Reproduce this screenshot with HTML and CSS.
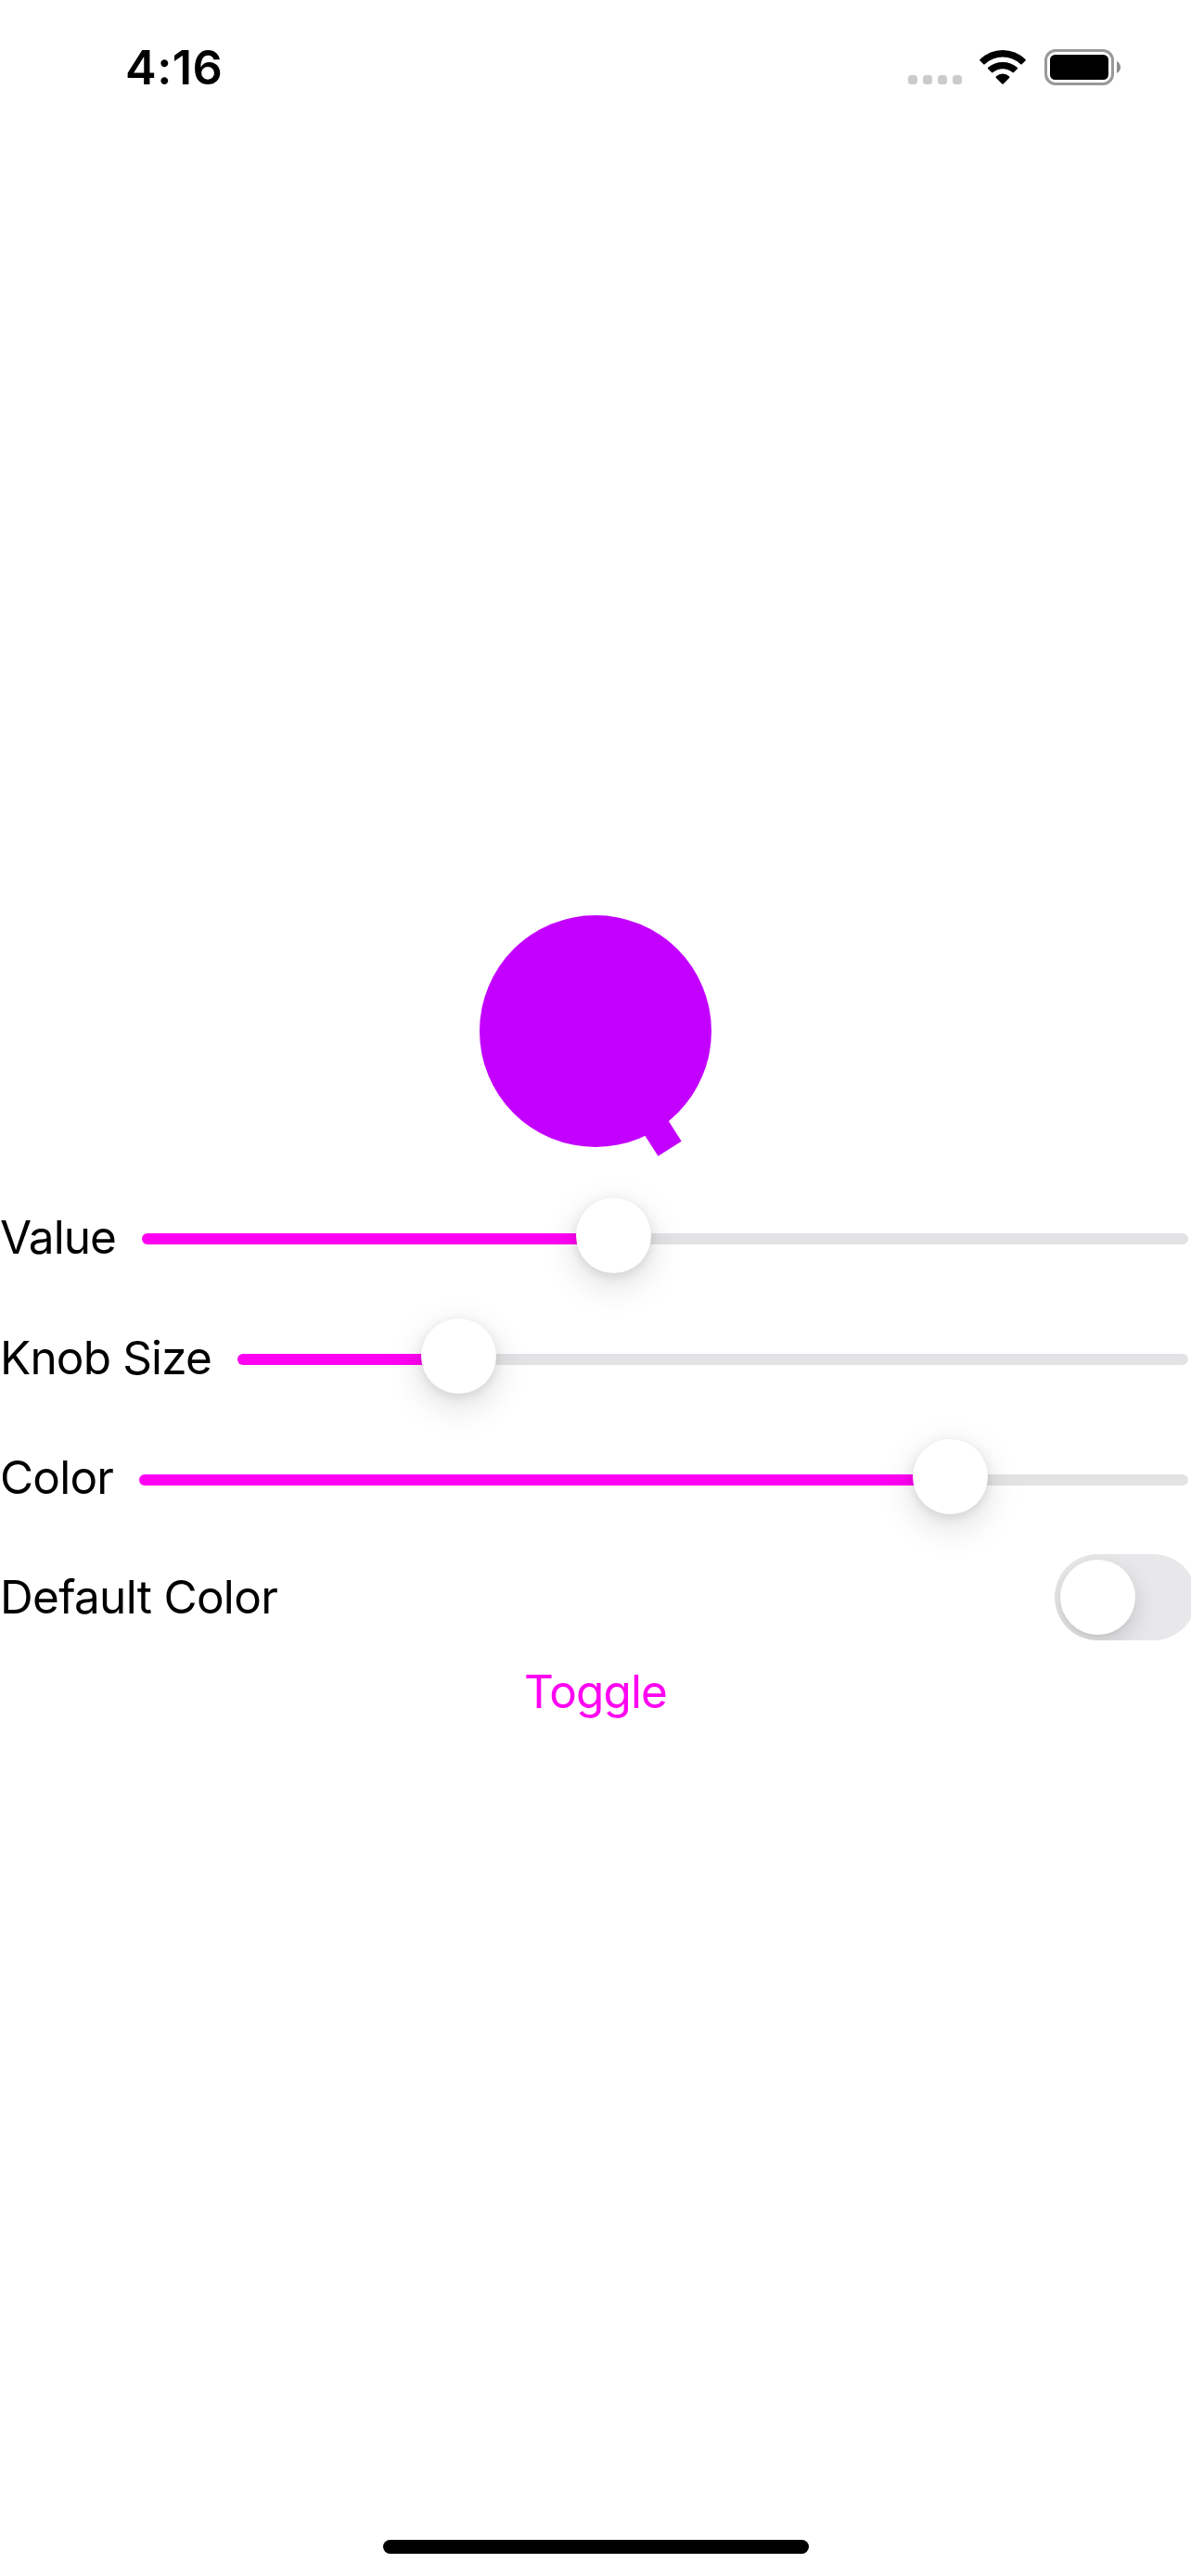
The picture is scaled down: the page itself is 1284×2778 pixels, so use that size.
FILE: index.html
```html
<!DOCTYPE html>
<html lang="en">
<head>
<meta charset="utf-8">
<title>Knob</title>
<link rel="stylesheet" href="styles.css">
</head>
<body>
<div class="screen">
  <header class="status-bar">
    <span class="time">4:16</span>
    <div class="indicators">
      <svg class="signal" viewBox="0 0 58 10"><rect width="10" height="10" rx="3.5"/><rect x="16" width="10" height="10" rx="3.5"/><rect x="32" width="10" height="10" rx="3.5"/><rect x="48" width="10" height="10" rx="3.5"/></svg>
      <svg class="wifi" viewBox="0 0 50 37">
        <path d="M.5 10Q11 0 25 0T49.500 10Q50.200 10.700 49.500 11.400L45.700 15.200Q45 15.900 44.300 15.200Q36 7.500 25 7.500T5.700 15.200Q5 15.900 4.300 15.200L.5 11.400Q-.2 10.700 .5 10Z"/>
        <path d="M9.300 18.700Q16 13 25 13T40.700 18.700Q41.600 19.500 40.800 20.300L37 24.100Q36.300 24.800 35.500 24.100Q31 20.300 25 20.300T14.500 24.100Q13.700 24.800 13 24.100L9.200 20.300Q8.400 19.500 9.300 18.700Z"/>
        <path d="M18 28.300Q21 25.600 25 25.600T32 28.300Q32.900 29.100 32.100 29.900L25.700 36.400Q25 37.100 24.300 36.400L17.900 29.900Q17.100 29.100 18 28.300Z"/>
      </svg>
      <svg class="battery" viewBox="0 0 82 39"><rect x="1.500" y="1.500" width="72" height="36" rx="10.500" fill="none" stroke="#999" stroke-width="3"/><rect x="6" y="6" width="63" height="27" rx="5.500"/><path d="M78 13Q82 15.500 82 19.500T78 26Z" fill="#8c8c8c"/></svg>
    </div>
  </header>
  <main class="content">
    <svg class="dial" viewBox="0 0 250 250"><circle cx="125" cy="125" r="125"/><path d="M161.500 211.500L187 195.500L217.700 243.700L192.500 259.700Z"/></svg>
    <div class="row">
      <span class="label label-value">Value</span>
      <div class="slider"><div class="fill" style="width: 508px"><i class="thumb"></i></div></div>
    </div>
    <div class="row">
      <span class="label label-size">Knob Size</span>
      <div class="slider"><div class="fill" style="width: 238px"><i class="thumb"></i></div></div>
    </div>
    <div class="row">
      <span class="label label-color">Color</span>
      <div class="slider"><div class="fill" style="width: 874px"><i class="thumb"></i></div></div>
    </div>
    <div class="row row-switch">
      <span class="label label-default">Default Color</span>
      <div class="switch"><i class="switch-thumb"></i></div>
    </div>
    <button class="toggle">Toggle</button>
  </main>
  <div class="home-indicator"></div>
</div>
</body>
</html>
```

FILE: styles.css
```css
* {
  box-sizing: border-box;
}

body {
  margin: 0;
  background: #fff;
  color: #000;
  font-family: Inter, "Liberation Sans", sans-serif;
}

.screen {
  width: 1284px;
  height: 2778px;
  display: flex;
  flex-direction: column;
  overflow: hidden;
}

.status-bar {
  height: 141px;
  flex: none;
  display: flex;
  justify-content: space-between;
  align-items: flex-start;
  padding: 53px 76px 0 135px;
}

.time {
  font-size: 50.5px;
  font-weight: 600;
  line-height: 40px;
  letter-spacing: 0.5px;
}

.indicators {
  display: flex;
  height: 39px;
}

.signal {
  width: 58px;
  height: 10px;
  margin: 28px 19px 0 0;
  fill: #cbcbcb;
}

.wifi {
  width: 50px;
  height: 37px;
  margin: 1px 20px 0 0;
}

.battery {
  width: 82px;
  height: 39px;
}

.content {
  flex: 1;
  display: flex;
  flex-direction: column;
  padding-top: 846px;
}

.dial {
  width: 250px;
  height: 250px;
  margin: 0 auto 34px;
  flex: none;
  overflow: visible;
  fill: #c300ff;
}

.row {
  height: 130px;
  flex: none;
  display: flex;
  align-items: center;
  padding-right: 3px;
}

.label {
  flex: none;
  font-size: 49.5px;
  line-height: 60px;
  white-space: nowrap;
  padding-bottom: 4px;
}

.label-value {
  width: 153px;
  letter-spacing: -0.9px;
}

.label-size {
  width: 256px;
  letter-spacing: -0.85px;
}

.label-color {
  width: 150px;
  padding-bottom: 6px;
  letter-spacing: -0.8px;
}

.label-default {
  padding-bottom: 1px;
  letter-spacing: -0.7px;
}

.slider {
  flex: 1;
  height: 12px;
  border-radius: 6px;
  background: #e3e3e5;
}

.fill {
  position: relative;
  height: 12px;
  border-radius: 6px;
  background: #ff00f2;
}

.thumb {
  position: absolute;
  right: -41px;
  top: -38px;
  width: 81px;
  height: 81px;
  border-radius: 50%;
  background: #fff;
  box-shadow: 0 12px 39px rgba(0, 0, 0, 0.14), 0 3px 12px rgba(0, 0, 0, 0.1);
}

.row-switch {
  height: 123px;
  justify-content: space-between;
  padding-right: 0;
}

.switch {
  flex: none;
  width: 153px;
  height: 93px;
  margin-right: -6px;
  padding: 6px;
  border-radius: 47px;
  background: #e8e8ea;
  overflow: hidden;
}

.switch-thumb {
  display: block;
  width: 81px;
  height: 81px;
  border-radius: 50%;
  background: #fff;
  box-shadow: 0 9px 24px rgba(0, 0, 0, 0.15), 0 3px 3px rgba(0, 0, 0, 0.03);
}

.toggle {
  align-self: center;
  border: 0;
  padding: 0;
  margin-top: 10px;
  background: none;
  color: #ff00f2;
  font: 49.5px/60px Inter, "Liberation Sans", sans-serif;
  letter-spacing: -0.9px;
}

.home-indicator {
  width: 459px;
  height: 15px;
  margin: 0 auto 24px;
  border-radius: 8px;
  background: #000;
}
```
